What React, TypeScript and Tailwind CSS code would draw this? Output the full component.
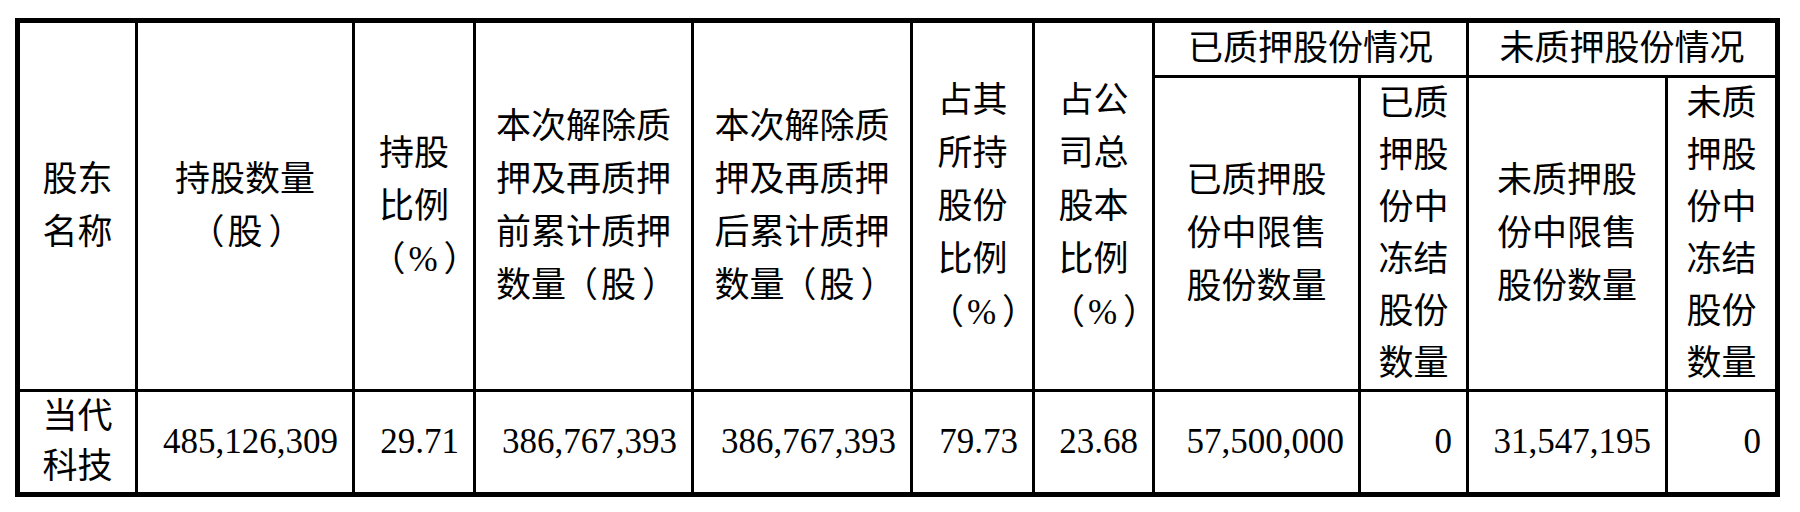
import React from "react";

const headCell =
  "bg-white flex items-center justify-center text-center text-[35px] text-black";
const numCell =
  "bg-white flex items-center justify-end pr-[14px] text-[35px] text-black leading-[40px]";

function Txt({ s }: { s: string }) {
  const parts: React.ReactNode[] = [];
  let buf = "";
  s.split("").forEach((ch, i) => {
    if (ch === "（" || ch === "）") {
      if (buf) parts.push(buf);
      buf = "";
      parts.push(
        <span
          key={i}
          className={
            ch === "（"
              ? "inline-block -translate-x-[3px]"
              : "inline-block translate-x-[6px]"
          }
        >
          {ch}
        </span>
      );
    } else {
      buf += ch;
    }
  });
  if (buf) parts.push(buf);
  return <>{parts}</>;
}

function Lines({ lines, lh }: { lines: string[]; lh: string }) {
  return (
    <div className={lh}>
      {lines.map((l, i) => (
        <div
          key={i}
          className={`whitespace-nowrap ${l === "（%）" ? "pl-[18px]" : ""}`}
        >
          <Txt s={l} />
        </div>
      ))}
    </div>
  );
}

export default function App() {
  return (
    <div className="bg-white w-[1800px] h-[512px] pl-[15px] pt-[18px] [font-family:'Liberation_Serif','Noto_Sans_CJK_SC',serif]">
      <div className="grid w-fit bg-black p-[5px] gap-[3px] grid-cols-[115px_214px_118px_215px_216px_119px_117px_203px_105px_196px_107px] grid-rows-[52px_311px_100px]">
        <div className={`${headCell} row-span-2`}>
          <Lines lines={["股东", "名称"]} lh="leading-[53px]" />
        </div>
        <div className={`${headCell} row-span-2`}>
          <Lines lines={["持股数量", "（股）"]} lh="leading-[53px]" />
        </div>
        <div className={`${headCell} row-span-2`}>
          <Lines lines={["持股", "比例", "（%）"]} lh="leading-[53px]" />
        </div>
        <div className={`${headCell} row-span-2`}>
          <Lines
            lines={["本次解除质", "押及再质押", "前累计质押", "数量（股）"]}
            lh="leading-[53px]"
          />
        </div>
        <div className={`${headCell} row-span-2`}>
          <Lines
            lines={["本次解除质", "押及再质押", "后累计质押", "数量（股）"]}
            lh="leading-[53px]"
          />
        </div>
        <div className={`${headCell} row-span-2`}>
          <Lines
            lines={["占其", "所持", "股份", "比例", "（%）"]}
            lh="leading-[53px]"
          />
        </div>
        <div className={`${headCell} row-span-2`}>
          <Lines
            lines={["占公", "司总", "股本", "比例", "（%）"]}
            lh="leading-[53px]"
          />
        </div>
        <div className={`${headCell} col-span-2 leading-[52px]`}>已质押股份情况</div>
        <div className={`${headCell} col-span-2 leading-[52px]`}>未质押股份情况</div>

        <div className={headCell}>
          <Lines lines={["已质押股", "份中限售", "股份数量"]} lh="leading-[53px]" />
        </div>
        <div className={`${headCell} overflow-visible`}>
          <Lines
            lines={["已质", "押股", "份中", "冻结", "股份", "数量"]}
            lh="leading-[52px]"
          />
        </div>
        <div className={headCell}>
          <Lines lines={["未质押股", "份中限售", "股份数量"]} lh="leading-[53px]" />
        </div>
        <div className={`${headCell} overflow-visible`}>
          <Lines
            lines={["未质", "押股", "份中", "冻结", "股份", "数量"]}
            lh="leading-[52px]"
          />
        </div>

        <div className={headCell}>
          <Lines lines={["当代", "科技"]} lh="leading-[50px]" />
        </div>
        <div className={numCell}>485,126,309</div>
        <div className={numCell}>29.71</div>
        <div className={numCell}>386,767,393</div>
        <div className={numCell}>386,767,393</div>
        <div className={numCell}>79.73</div>
        <div className={numCell}>23.68</div>
        <div className={numCell}>57,500,000</div>
        <div className={numCell}>0</div>
        <div className={numCell}>31,547,195</div>
        <div className={numCell}>0</div>
      </div>
    </div>
  );
}
